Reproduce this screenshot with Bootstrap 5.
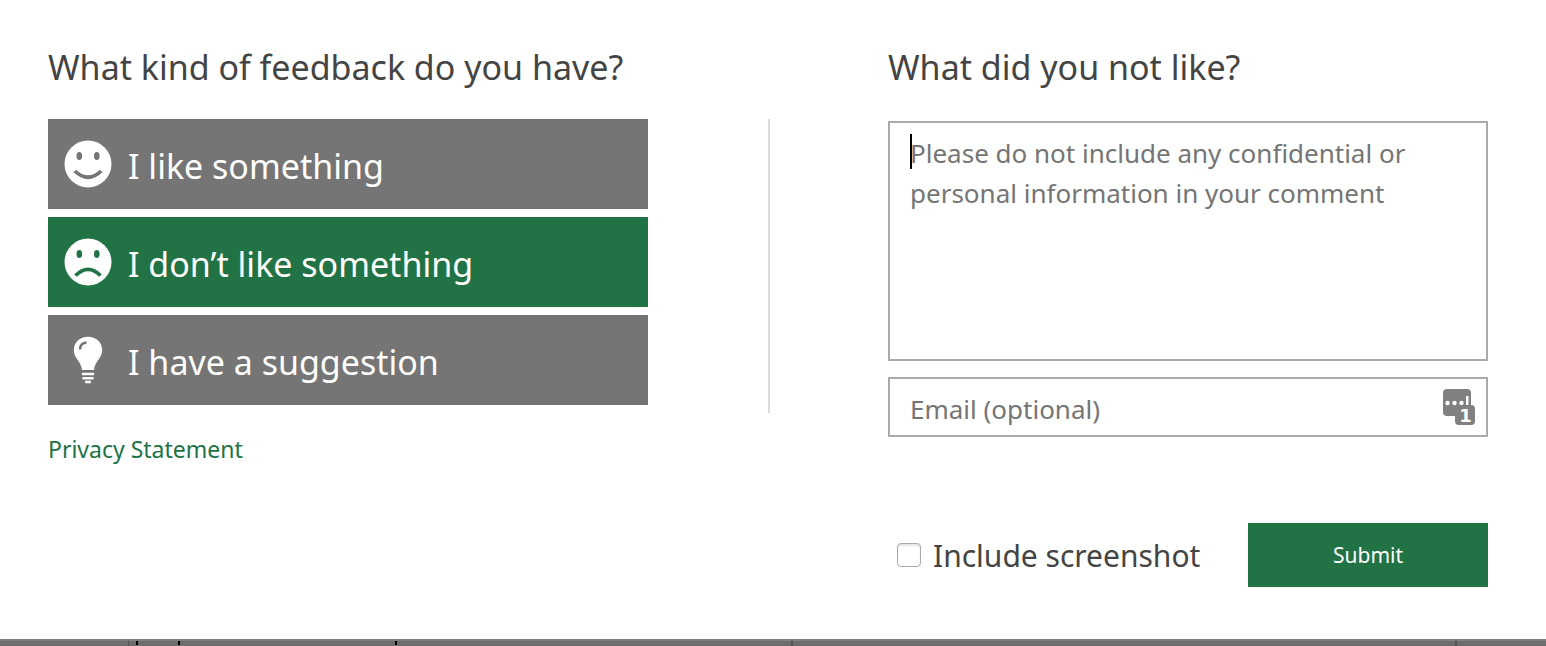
<!DOCTYPE html>
<html lang="en">
<head>
<meta charset="utf-8">
<meta name="viewport" content="width=device-width, initial-scale=1">
<title>Feedback</title>
<link href="https://cdn.jsdelivr.net/npm/bootstrap@5.3.0/dist/css/bootstrap.min.css" rel="stylesheet">
<style>
  :root { --brand: #217346; --neutral: #757575; --ink: #444; --line: #ababab; }
  body { font-family: Tahoma, "Noto Sans", sans-serif; color: var(--ink); background: #fff; }
  .feedback { display: grid; grid-template-columns: 1fr 240px 1fr; padding: 43px 58px 48px 48px; }
  .feedback h2 { font-size: 34px; line-height: 48px; font-weight: 400; margin: 0 0 28px; }
  .choice {
    --bs-btn-color: #fff; --bs-btn-bg: var(--neutral);
    --bs-btn-hover-color: #fff; --bs-btn-hover-bg: #666;
    --bs-btn-active-color: #fff; --bs-btn-active-bg: var(--brand);
    --bs-btn-border-width: 0px; --bs-btn-border-radius: 0;
    --bs-btn-padding-x: 16px; --bs-btn-padding-y: 0px;
    height: 90px; font-size: 34px; line-height: 48px;
  }
  .choice span { padding-top: 4px; }
  .privacy { color: var(--brand); font-size: 23px; line-height: 32px; margin-top: 28px; }
  .divider { width: 2px; height: 294px; margin: 76px 0 0 120px; background: #dcdcdc; }
  .field, .field:focus { border: 2px solid var(--line); border-radius: 0; padding: 10px 20px; font-size: 26px; line-height: 40px; color: var(--ink); box-shadow: none; }
  .field::placeholder { color: var(--neutral); }
  .comment-box { margin-top: 30px; }
  .comment { height: 240px; resize: none; }
  .email, .email:focus { height: 60px; padding: 12px 60px 8px 20px; }
  .caret { left: 22px; top: 13px; width: 2px; height: 35px; background: #000; }
  .manager { right: 12px; top: 11px; }
  .manager text { font: 700 18px "DejaVu Sans", sans-serif; }
  .actions { margin-top: 86px; height: 64px; }
  .shot { width: 24px; height: 24px; margin: 0 0 0 9px; border: 1px solid #aaa; border-radius: 6px; box-shadow: inset 0 2px 2px #e4e4e4; }
  .shot-label { font-size: 30px; line-height: 44px; padding: 2px 0 0 4px; }
  .submit {
    --bs-btn-color: #fff; --bs-btn-bg: var(--brand);
    --bs-btn-hover-color: #fff; --bs-btn-hover-bg: #1a5c38;
    --bs-btn-border-width: 0px; --bs-btn-border-radius: 0;
    width: 240px; height: 64px; font-size: 21px; padding-top: 8px;
  }
  .sheet-edge { height: 7px; background: linear-gradient(#7e7e7e 0 2px, #6e6e6e 2px); }
</style>
</head>
<body class="d-flex flex-column min-vh-100">
<main class="feedback flex-grow-1">
  <section>
    <h2>What kind of feedback do you have?</h2>
    <div class="d-grid gap-2">
      <button type="button" class="btn choice d-flex align-items-center gap-3 text-start">
        <svg width="48" height="48" viewBox="0 0 48 48" aria-hidden="true"><circle cx="24" cy="24" r="23.5" fill="#fff"/><g fill="#757575"><ellipse cx="15.3" cy="16" rx="2.8" ry="4.1"/><ellipse cx="32.8" cy="16" rx="2.8" ry="4.1"/></g><path d="M10.800 31Q24 43.500 37.200 31" fill="none" stroke="#757575" stroke-width="3.600"/></svg>
        <span>I like something</span>
      </button>
      <button type="button" class="btn choice active d-flex align-items-center gap-3 text-start" aria-pressed="true">
        <svg width="48" height="48" viewBox="0 0 48 48" aria-hidden="true"><circle cx="24" cy="24" r="23.5" fill="#fff"/><g fill="#217346"><ellipse cx="15.3" cy="16" rx="2.8" ry="4.1"/><ellipse cx="32.8" cy="16" rx="2.8" ry="4.1"/></g><path d="M11.500 37.500Q24 25 36.500 37.500" fill="none" stroke="#217346" stroke-width="3.600"/></svg>
        <span>I don’t like something</span>
      </button>
      <button type="button" class="btn choice d-flex align-items-center gap-3 text-start">
        <svg width="48" height="48" viewBox="0 0 48 48" aria-hidden="true"><path d="M24 .7C16 .7 9.800 6.400 9.800 14c0 8.500 7.600 11.300 8.200 20h12c.6-8.700 8.200-11.500 8.200-20C38.200 6.400 32 .7 24 .7z" fill="#fff"/><path d="M16 13.500c.2-4.200 2.500-6.800 6.500-7" fill="none" stroke="#757575" stroke-width="2.600"/><g stroke="#fff" stroke-width="2.600" stroke-linecap="round"><path d="M19 38h10M19.500 42.200h9M22.300 46h3.400"/></g></svg>
        <span>I have a suggestion</span>
      </button>
    </div>
    <a href="#privacy" class="privacy d-inline-block text-decoration-none">Privacy Statement</a>
  </section>
  <div class="divider"></div>
  <form>
    <h2><label for="comment">What did you not like?</label></h2>
    <div class="position-relative mb-3 comment-box">
      <textarea id="comment" class="form-control field comment" placeholder="Please do not include any confidential or personal information in your comment"></textarea>
      <div class="caret position-absolute"></div>
    </div>
    <div class="position-relative">
      <input id="email" type="email" class="form-control field email" placeholder="Email (optional)" aria-label="Email (optional)">
      <svg class="manager position-absolute" width="34" height="38" viewBox="0 0 34 38" aria-hidden="true"><rect x="1" y="1" width="28" height="27" rx="4" fill="#808080"/><g fill="#fff"><circle cx="5.500" cy="15" r="2.200"/><circle cx="12.500" cy="15" r="2.200"/><circle cx="19.500" cy="15" r="2.200"/><rect x="24" y="8" width="2.500" height="9"/></g><rect x="13" y="17" width="20" height="20" rx="4" fill="#808080"/><text x="23.500" y="34" text-anchor="middle" fill="#fff">1</text></svg>
    </div>
    <div class="actions d-flex align-items-center justify-content-between">
      <div class="d-flex align-items-center gap-2">
        <input id="shot" type="checkbox" class="form-check-input shot">
        <label for="shot" class="shot-label">Include screenshot</label>
      </div>
      <button type="submit" class="btn submit">Submit</button>
    </div>
  </form>
</main>
<footer class="sheet-edge d-flex">
  <svg width="100%" height="7" aria-hidden="true"><g fill="#000"><rect x="136" y="2" width="2" height="4"/><rect x="178" y="2" width="2" height="4"/><rect x="395" y="2" width="2" height="4"/></g><g fill="#555"><rect x="128" y="2" width="1" height="5"/><rect x="791" y="2" width="2" height="5"/><rect x="1455" y="2" width="2" height="5"/></g></svg>
</footer>
<script src="https://cdn.jsdelivr.net/npm/bootstrap@5.3.0/dist/js/bootstrap.bundle.min.js"></script>
</body>
</html>
